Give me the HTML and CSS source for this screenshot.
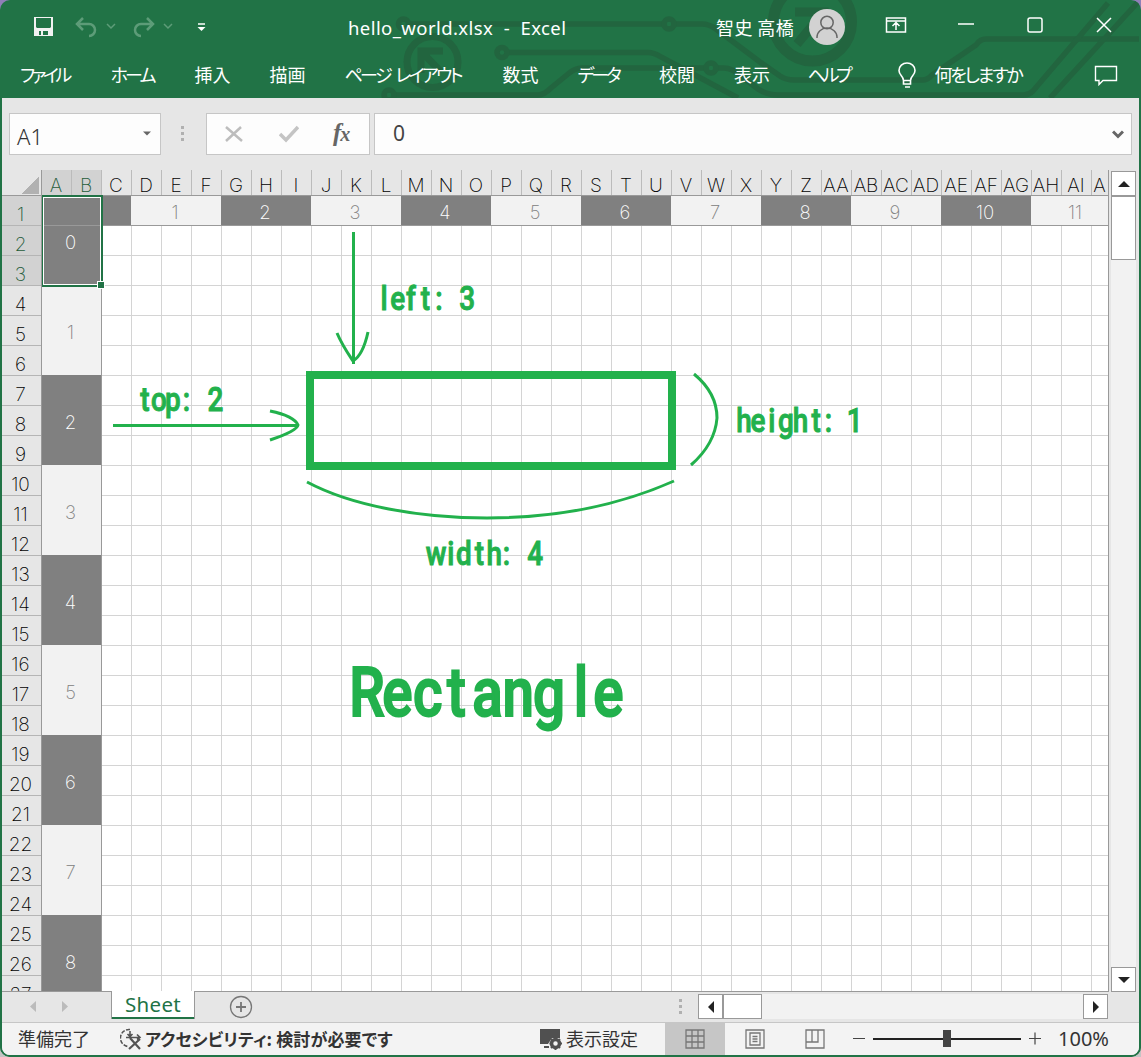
FILE: index.html
```html
<!DOCTYPE html>
<html lang="ja">
<head>
<meta charset="utf-8">
<title>hello_world.xlsx - Excel</title>
<link rel="stylesheet" href="styles.css">
</head>
<body>
<div class="window">
  <header class="titlebar">
    <svg class="circuit" width="1141" height="98" viewBox="0 0 1141 98" fill="none">
      <g stroke-width="5.5">
        <path d="M408 24H664M674 24H702Q709 24 716 29L760 62L780 76Q786 80 794 80H922Q928 80 932 75L976 45Q980 39 986 39H1139"/>
        <path d="M507 52.500H648Q654 52.500 661 57L738 98"/>
        <path d="M394 95H538Q544 95 551 88L568 74Q575 68 582 68H706M716 68H724Q732 68 741 76L758 89Q767 95 778 95H1024Q1029 95 1033 91L1108 3M1050 98L1138 2"/>
        <circle cx="403.500" cy="24" r="5"/><circle cx="669" cy="24" r="5"/><circle cx="502" cy="52.500" r="5"/><circle cx="711" cy="68" r="5"/><circle cx="389" cy="95" r="5"/>
      </g>
      <circle cx="432.500" cy="62" r="25.500" stroke-width="7"/>
      <path d="M443 51H421V73M422 52L441 72" stroke-width="7"/>
      <circle cx="812.500" cy="22" r="39" stroke-width="11"/>
      <path d="M795 12H824V40M823 13L797 44" stroke-width="9"/>
    </svg>
    <div class="caption">
      <div class="quick">
        <svg width="200" height="40" viewBox="20 8 200 40" fill="none">
          <path d="M34 17h19v19H34z" fill="#f2f2f2"/><path d="M36 18h15v9l-1 1H37l-1-1zM39 31h9v4h-9z" fill="#217346"/><path d="M41 31h2v4h-2z" fill="#f2f2f2"/>
          <g stroke="#5d9c78" stroke-width="2.500"><path d="M83 18l-6 6 6 6M77 24h12a6 6 0 0 1 0 12"/><path d="M147 18l6 6-6 6M153 24h-12a6 6 0 0 0 0 12"/></g>
          <path d="M107 24l4 4 4-4M164 24l4 4 4-4" stroke="#5d9c78" stroke-width="1.500"/>
          <path d="M198 24h7" stroke="#fff" stroke-width="1.500"/><path d="M197.500 27h8l-4 4z" fill="#fff"/>
        </svg>
      </div>
      <div class="title">hello_world.xlsx&nbsp; -&nbsp; Excel</div>
      <div class="user">智史 高橋</div>
      <svg class="controls" width="333" height="54" viewBox="808 0 333 54" fill="none" stroke="#fff" stroke-width="1.500">
        <circle cx="827" cy="27" r="18" fill="#d2d2d2" stroke="none"/>
        <g stroke="#666"><circle cx="827" cy="22.500" r="6.200"/><path d="M817 38v-1a9 8 0 0 1 20 0v1"/></g>
        <path d="M886.500 18h19v14h-19zM887 21h18M896 30v-7M892.500 26l3.500-3.500 3.500 3.500"/>
        <path d="M958 24h16" stroke-width="1.500"/><rect x="1028" y="18" width="14" height="14" rx="2"/><path d="M1097 18l14 14M1111 18l-14 14"/>
      </svg>
    </div>
    <nav class="tabs">
      <span class="t-file">ファイル</span><span class="t-home">ホーム</span><span class="t-two">挿入</span><span class="t-two">描画</span><span class="t-page">ページ レイアウト</span><span class="t-two">数式</span><span class="t-data">データ</span><span class="t-two">校閲</span><span class="t-two">表示</span><span class="t-help">ヘルプ</span>
      <svg class="bulb" width="20" height="28" viewBox="0 0 20 28" fill="none" stroke="#fff" stroke-width="1.600"><path d="M6.500 18.500C6.500 14 2 13.500 2 8.500a8 7.500 0 0 1 16 0C18 13.500 13.500 14 13.500 18.500zM6.500 18v4h7v-4M8 25h5"/></svg>
      <span class="t-ask">何をしますか</span>
      <svg class="comment" width="24" height="22" viewBox="0 0 24 22" fill="none" stroke="#fff" stroke-width="1.400"><path d="M1.500 1.500h21v14H9l-4 4v-4H1.500z"/></svg>
    </nav>
  </header>

  <main class="frame">
    <div class="formula">
      <div class="namebox"><span>A1</span><svg width="8" height="5" viewBox="0 0 8 5"><path d="M0 .5h8L4 4.500z" fill="#666"/></svg></div>
      <div class="dots"><i></i><i></i><i></i></div>
      <div class="fx">
        <svg width="18" height="18" viewBox="0 0 18 18" fill="none" stroke="#bdbdbd" stroke-width="2.500"><path d="M1 2l16 14M16 2L1 16"/></svg>
        <svg width="20" height="18" viewBox="0 0 20 18" fill="none" stroke="#c4c4c4" stroke-width="3.500"><path d="M1 9l6 6L19 2"/></svg>
        <em>f<small>x</small></em>
      </div>
      <div class="value"><span>0</span><svg width="12" height="9" viewBox="0 0 12 9" fill="none" stroke="#666" stroke-width="3"><path d="M1 1.500l5 5 5-5"/></svg></div>
    </div>

    <div class="sheet">
      <div class="rowheads">
        <div class="corner"></div>
        <b class="on">1</b><b class="on">2</b><b class="on">3</b><b>4</b><b>5</b><b>6</b><b>7</b><b>8</b><b>9</b><b>10</b><b>11</b><b>12</b><b>13</b><b>14</b><b>15</b><b>16</b><b>17</b><b>18</b><b>19</b><b>20</b><b>21</b><b>22</b><b>23</b><b>24</b><b>25</b><b>26</b><b>27</b>
      </div>
      <div class="grid">
        <div class="colheads"><b class="on">A</b><b class="on">B</b><b>C</b><b>D</b><b>E</b><b>F</b><b>G</b><b>H</b><b>I</b><b>J</b><b>K</b><b>L</b><b>M</b><b>N</b><b>O</b><b>P</b><b>Q</b><b>R</b><b>S</b><b>T</b><b>U</b><b>V</b><b>W</b><b>X</b><b>Y</b><b>Z</b><b>AA</b><b>AB</b><b>AC</b><b>AD</b><b>AE</b><b>AF</b><b>AG</b><b>AH</b><b>AI</b><b class="cut">A</b></div>
        <div class="cells">
          <div class="left"><span class="first">0</span><span>1</span><span>2</span><span>3</span><span>4</span><span>5</span><span>6</span><span>7</span><span>8</span></div>
          <div class="top"><span class="c"></span><span>1</span><span>2</span><span>3</span><span>4</span><span>5</span><span>6</span><span>7</span><span>8</span><span>9</span><span>10</span><span>11</span></div>
          <div class="selection"></div>
          <svg class="notes" width="1067" height="796" viewBox="41 195 1067 796" fill="none" stroke="#22b14c" stroke-width="3">
            <rect x="310" y="375" width="362" height="91" stroke-width="8"/>
            <path d="M353.500 232V364M337 333C342 345 349 355 353 361Q363 355 368 332"/>
            <path d="M113 425.500H297M270 411Q294 416 298 425Q297 431 270 440"/>
            <path d="M694 374Q717 393 717 418Q715 444 691 465M307 482C352 506 420 518 487 518C556 518 620 505 674 481"/>
            <g class="hand">
              <text transform="translate(384 309.500) scale(.82 1)" x="0 16.600 33 50.600 67 84 101.500">left: 3</text>
              <text transform="translate(145 411) scale(.82 1)" x="0 17 34 50.600 68 86">top: 2</text>
              <text transform="translate(744 432) scale(.82 1)" x="0 17 34 51 69 88 103 120 135">height: 1</text>
              <text transform="translate(436 564.500) scale(.82 1)" x="0 18 34 53 71 86 103 121">width: 4</text>
              <text class="big" transform="translate(367 716) scale(.82 1)" x="0 37 74 109 147 184.500 222 261 294.500">Rectangle</text>
            </g>
          </svg>
        </div>
      </div>
      <div class="vscroll">
        <div class="btn"><svg width="12" height="6" viewBox="0 0 12 6"><path d="M0 6h12L6 0z" fill="#222"/></svg></div>
        <div class="vthumb"></div><div class="vtrack"></div>
        <div class="btn"><svg width="12" height="6" viewBox="0 0 12 6"><path d="M0 0h12L6 6z" fill="#222"/></svg></div>
      </div>
    </div>

    <div class="sheetbar">
      <svg class="navs" width="109" height="28" viewBox="2 992 109 28"><path d="M36 1001v11l-6-5.500zM62 1001v11l6-5.500z" fill="#bbb"/></svg>
      <div class="sheettab">Sheet</div>
      <svg class="add" width="24" height="24" viewBox="0 0 24 24" fill="none" stroke="#777"><circle cx="12" cy="12" r="10.500" stroke-width="1.300"/><path d="M7 12h10M12 7v10" stroke-width="1.800"/></svg>
      <div class="dots hdots"><i></i><i></i><i></i></div>
      <div class="hscroll">
        <div class="btn"><svg width="6" height="12" viewBox="0 0 6 12"><path d="M6 0v12L0 6z" fill="#222"/></svg></div>
        <div class="hthumb"></div><div class="htrack"></div>
        <div class="btn"><svg width="6" height="12" viewBox="0 0 6 12"><path d="M0 0v12l6-6z" fill="#222"/></svg></div>
      </div>
    </div>

    <footer class="status">
      <span class="ready">準備完了</span>
      <svg class="access" width="22" height="22" viewBox="0 0 22 22" fill="none" stroke="#555" stroke-width="1.600"><path d="M10 1.500A8.500 8.500 0 0 0 8 18.500" stroke-dasharray="4 1.500"/><path d="M10 3v5M7.500 6L10 8.500 12.500 6M6 9.500h13M17 6.500l3 3-3 2"/><path d="M10 10l10 11M20 11L9 21" stroke-width="2.200"/></svg>
      <span class="check">アクセシビリティ: 検討が必要です</span>
      <svg class="display" width="24" height="22" viewBox="0 0 24 22"><path d="M1 1h20v9h-8l-4 6H1zM5 18h5v2H5z" fill="#505050"/><circle cx="16.500" cy="15.500" r="4" fill="none" stroke="#505050" stroke-width="3.500"/><path d="M16.500 9v2.500M16.500 19.500V22M10.500 15.500h2M20.500 15.500h2.500M12 11l2 2M19 18l2 2M21 11l-2 2M14 18l-2 2" stroke="#505050" stroke-width="2"/></svg>
      <span class="setting">表示設定</span>
      <div class="view active"><svg width="20" height="20" viewBox="0 0 20 20"><path d="M1 1h18v18H1zM7 1v18M13 1v18M1 7h18M1 13h18"/></svg></div>
      <div class="view"><svg width="20" height="20" viewBox="0 0 20 20"><path d="M1 1h18v18H1zM5 4h10v12H5zM7.500 7.500h5M7.500 10h5M7.500 12.500h5"/></svg></div>
      <div class="view"><svg width="20" height="20" viewBox="0 0 20 20"><path d="M1 1h18v18H1zM7 1v12M1 13h12V1"/></svg></div>
      <svg class="zoom" width="194" height="20" viewBox="850 1029 194 20" fill="none" stroke="#444"><path d="M853 1038.500h12M1029 1038.500h12M1035 1032.500v12" stroke-width="1.200"/><path d="M873 1039h148" stroke-width="2" stroke="#222"/><path d="M943 1030h8v17h-8z" fill="#444" stroke="none"/></svg>
      <span class="percent">100%</span>
    </footer>
  </main>
</div>
</body>
</html>
```
FILE: styles.css
```css
* { box-sizing: border-box; }
body {
  margin: 0;
  background: linear-gradient(#8f7fb8 50%, #c4c4c4 50%);
  font-family: "Noto Sans", "Noto Sans CJK JP", sans-serif;
}
svg { display: block; flex: none; }
.window {
  width: 1141px; height: 1057px;
  display: flex; flex-direction: column;
  border-radius: 10px;
  overflow: hidden;
  background: #217346;
}

.titlebar { position: relative; height: 98px; color: #fff; font-size: 18px; }
.circuit { position: absolute; left: 0; top: 0; stroke: #22653f; }
.caption { position: relative; height: 54px; display: flex; align-items: center; }
.quick { width: 348px; padding-left: 20px; margin-top: 1px; }
.title { width: 368px; white-space: pre; font-size: 18.500px; letter-spacing: .42px; margin-top: 1px; }
.user { width: 92px; font-family: "Noto Sans CJK JP", sans-serif; white-space: nowrap; letter-spacing: .4px; }
.tabs {
  position: relative; height: 44px; padding: 0 0 4px 20px;
  display: flex; align-items: center;
  font: 18px "Noto Sans CJK JP", sans-serif;
  font-feature-settings: "palt";
  white-space: nowrap;
}
.tabs span { margin-right: 39px; flex: none; }
.t-file { width: 51.5px; letter-spacing: -3.4px; }
.t-home { width: 45px; letter-spacing: -2.8px; }
.t-two { width: 36px; }
.t-page { width: 119px; letter-spacing: -2.6px; word-spacing: 4px; }
.t-data { width: 42.5px; letter-spacing: -3px; }
.t-help { width: 46px; margin-left: -1.5px; letter-spacing: -3.2px; }
.bulb { margin: 3px 18px 0 4px; }
.tabs .t-ask { width: 91px; letter-spacing: -2.2px; margin-right: 68px; }
.comment { margin-top: 3px; }

.frame {
  flex: 1; display: flex; flex-direction: column;
  border: solid #217346; border-width: 0 2px 2px;
  border-radius: 0 0 10px 10px;
  overflow: hidden;
  background: #e6e6e6;
}
.formula { height: 72px; padding: 15px 7px 0; display: flex; }
.namebox, .fx, .value { height: 42px; border: 1px solid #c6c6c6; background: #fdfdfd; display: flex; align-items: center; }
.namebox { width: 152px; padding: 3px 9px 0 7px; justify-content: space-between; font-size: 22px; color: #333; }
.namebox span { font-weight: 350; }
.namebox svg { margin-top: -4px; }
.dots { width: 45px; display: flex; flex-direction: column; align-items: center; gap: 3px; padding: 13px 2px 0 0; }
.dots i { width: 3px; height: 3px; background: #b0b0b0; }
.fx { width: 164px; padding: 0 18px; gap: 36px; }
.fx em { font: italic bold 25px "Liberation Serif", serif; color: #666; margin-left: -2px; margin-top: -3px; }
.fx small { font-size: 20px; margin-left: -1px; }
.value { flex: 1; margin-left: 4px; padding: 0 7px 0 18px; justify-content: space-between; font-size: 21px; color: #444; }
.value span { margin-top: -3px; }

.sheet { height: 822px; display: flex; font-family: "Inter", sans-serif; overflow: hidden; }
.sheet b { font-weight: 250; display: flex; flex: none; color: #000; }
.rowheads { width: 39px; height: 822px; overflow: hidden; display: flex; flex-direction: column; font-size: 19px; border-bottom: 1px solid #999; }
.corner { height: 26px; flex: none; border-bottom: 1px solid #999; background: linear-gradient(135deg, transparent 50%, #b1b1b1 50%) 19px 7px / 18px 17px no-repeat; }
.rowheads b { height: 30px; align-items: flex-end; justify-content: center; line-height: 20px; border-bottom: 1px solid #b5b5b5; padding-right: 2px; }
.sheet b.on { background: #d2d2d2; color: #1f5c3a; }
.grid { width: 1068px; overflow: hidden; border-left: 1px solid #999; border-right: 1px solid #999; border-bottom: 1px solid #999; }
.colheads { height: 26px; display: flex; border-bottom: 1px solid #999; font-size: 19px; overflow: hidden; }
.colheads b { width: 30px; justify-content: center; line-height: 31px; border-right: 1px solid #bbb; padding-right: 1px; }
.colheads .cut { border: 0; width: 16px; }
.cells {
  position: relative; height: 795px;
  background: linear-gradient(90deg, transparent 29px, #d4d4d4 29px) 0 0 / 30px 30px,
              linear-gradient(transparent 29px, #d4d4d4 29px) 0 0 / 30px 30px, #fff;
  display: flex;
}
.left, .top { display: flex; flex: none; font-size: 18.500px; font-weight: 250; }
.left { flex-direction: column; width: 60px; height: 795px; border-right: 1px solid #999; overflow: hidden; }
.left span { height: 90px; flex: none; display: flex; align-items: center; justify-content: center; padding: 4px 2px 0 0; color: #808080; background: #f2f2f2; }
.left span:nth-child(odd) { background: #808080; color: #fff; }
.left span.first { height: 89px; padding-top: 3px; background: linear-gradient(transparent 29px, #999 29px, #999 30px, transparent 30px) #808080; }
.top { height: 30px; width: 1007px; overflow: hidden; border-bottom: 1px solid #999; }
.top span { width: 90px; flex: none; display: flex; align-items: center; justify-content: center; padding: 3px 2px 0 0; color: #808080; background: #f2f2f2; }
.top span:nth-child(odd) { background: #808080; color: #fff; }
.top .c { width: 29px; }
.selection { position: absolute; left: -1px; top: -1px; width: 62px; height: 92px; border: 2px solid #217346; box-shadow: inset 0 0 0 1px #fff; }
.selection::after { content: ""; position: absolute; right: -3px; bottom: -3px; width: 6px; height: 6px; background: #217346; outline: 1px solid #fff; }
.notes { position: absolute; left: -1px; top: -1px; }
.hand { fill: #22b14c; stroke: #22b14c; stroke-width: 1px; font: 500 34px Roboto, sans-serif; text-anchor: middle; }
.hand .big { font-size: 69px; stroke-width: 2px; }
.vscroll { margin: 1px 3px 0 2px; width: 25px; display: flex; flex-direction: column; }
.btn { width: 25px; height: 25px; flex: none; border: 1px solid #999; background: #fff; display: flex; align-items: center; justify-content: center; }
.vthumb { height: 64px; border: 1px solid #999; background: #fff; }
.vtrack { flex: 1; background: #f2f2f2; }

.sheetbar { height: 30px; display: flex; }
.sheettab { width: 84px; height: 28px; margin-top: -1px; z-index: 1; background: #fff; border: solid #999; border-width: 0 1px; box-shadow: inset 0 -2px #217346; color: #217346; font: 20.500px/26px "Noto Sans", sans-serif; letter-spacing: .3px; text-align: center; }
.add { margin: 3px 0 0 34px; }
.hdots { margin-left: 405px; width: 45px; padding: 7px 0 0 0; }
.hscroll { width: 410px; height: 25px; margin: 2px 0 0 -5px; display: flex; }
.hthumb { width: 39px; border: 1px solid #999; background: #fff; }
.htrack { flex: 1; background: #f2f2f2; }

.status { height: 33px; border-top: 1px solid #c6c6c6; background: #f3f3f3; display: flex; align-items: center; font: 18px "Noto Sans CJK JP", sans-serif; color: #333; white-space: nowrap; }
.status > span { margin-top: -2px; }
.ready { width: 117px; padding-left: 16px; }
.access { margin-left: 1px; }
.check { width: 394px; margin-left: 3px; font-weight: 700; font-size: 17px; font-feature-settings: "palt"; letter-spacing: .1px; }
.setting { width: 99px; margin-left: 3px; }
.view { width: 60px; height: 33px; display: flex; align-items: center; justify-content: center; }
.view path { fill: none; stroke: #777; stroke-width: 1.3; }
.active { background: #c6c6c6; }
.zoom { margin-left: 5px; }
.percent { font: 20px "Noto Sans", sans-serif; margin-left: 14px; }
```
